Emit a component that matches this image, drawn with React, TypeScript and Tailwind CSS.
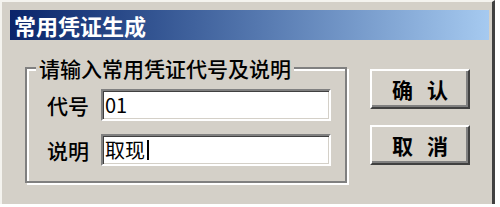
import React from 'react';

const cjk = { fontFamily: '"Noto Sans CJK SC", "Noto Sans", sans-serif' };

function Field({ label, value, caret }: { label: string; value: string; caret?: boolean }) {
  return (
    <div className="flex items-center">
      <span className="w-[54px] text-[21px] font-medium leading-none text-black">{label}</span>
      <div className="flex h-[32px] w-[230px] items-center border-2 border-t-[#808080] border-l-[#808080] border-r-white border-b-white bg-white pl-[2px] shadow-[inset_1px_1px_0_#404040,inset_-1px_-1px_0_#d4d0c8]">
        <span className="text-[20px] leading-none text-black">{value}</span>
        {caret && <span className="ml-[2px] h-[20px] w-[2px] bg-black" />}
      </div>
    </div>
  );
}

function Button({ text }: { text: string }) {
  return (
    <button className="flex h-[40px] w-[100px] items-center justify-center border-2 border-t-white border-l-white border-r-[#404040] border-b-[#404040] bg-[#d4d0c8] text-[21px] font-semibold leading-none text-black shadow-[inset_-2px_-2px_0_#808080] [word-spacing:9px]">
      {text}
    </button>
  );
}

export default function App() {
  return (
    <div className="h-[207px] w-[500px] bg-white" style={cjk}>
      <div className="flex h-[204px] w-[495px] flex-col border-l-2 border-t-2 border-r-[3px] border-l-[#f4f3ef] border-t-[#f4f3ef] border-r-[#404040] bg-[#d4d0c8] pl-2 pr-[3px] pt-2">
        {/* title bar */}
        <div className="flex h-[30px] items-center bg-gradient-to-r from-[#0a246a] to-[#a6caf0] pl-1">
          <span className="text-[22px] font-bold leading-none text-white">常用凭证生成</span>
        </div>

        <div className="flex pl-[15px]">
          {/* group box */}
          <div className="relative mt-[27px] flex w-[322px] flex-col gap-[13px] border-2 border-[#808080] pb-[15px] pl-[20px] pt-[20px] shadow-[inset_2px_2px_0_#fff,2px_2px_0_#fff]">
            <span className="absolute left-[9px] top-[-13px] bg-[#d4d0c8] px-[3px] text-[21px] font-medium leading-[24px] text-black">
              请输入常用凭证代号及说明
            </span>
            <Field label="代号" value="01" />
            <Field label="说明" value="取现" caret />
          </div>

          {/* buttons */}
          <div className="ml-[23px] mt-[29px] flex flex-col gap-[16px]">
            <Button text="确 认" />
            <Button text="取 消" />
          </div>
        </div>
      </div>
    </div>
  );
}
